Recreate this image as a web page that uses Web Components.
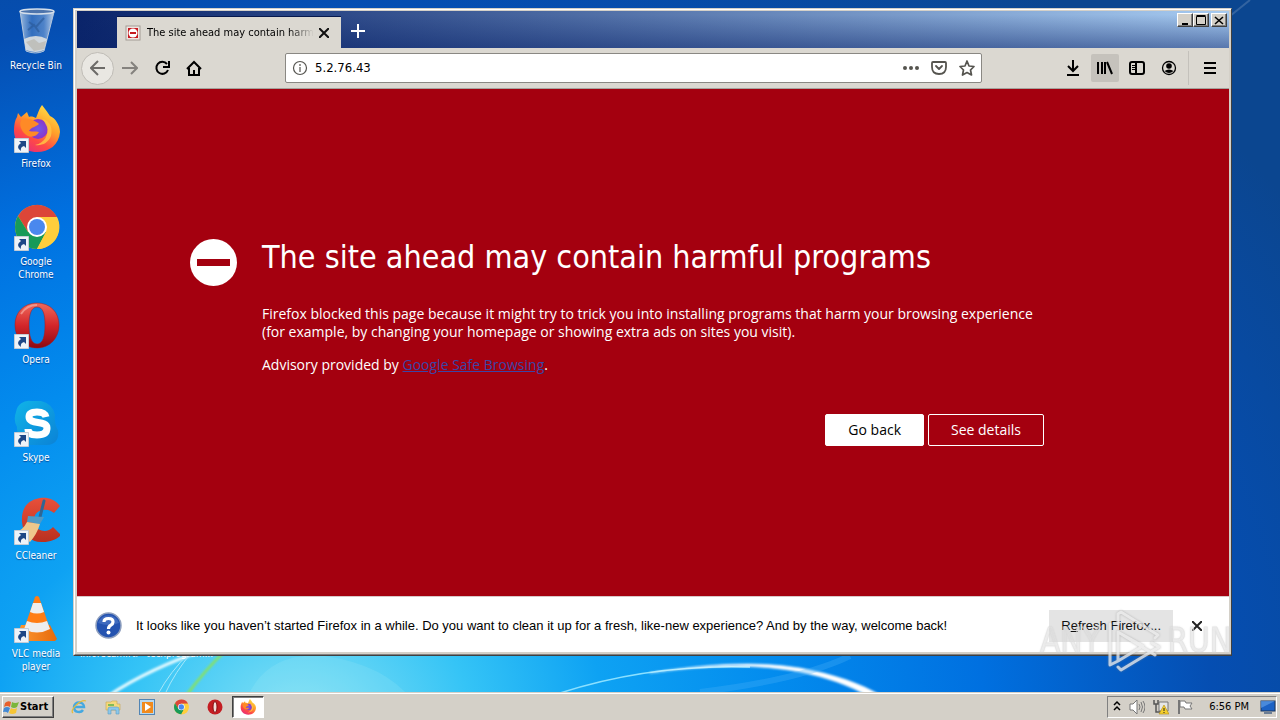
<!DOCTYPE html>
<html lang="en">
<head>
<meta charset="utf-8">
<title>Desktop</title>
<style>
  html, body { margin: 0; height: 100%; }
  body { font-family: "DejaVu Sans Condensed", Tahoma, sans-serif; overflow: hidden; }
  blocked-page a { color: #3b45a6; }
  blocked-page p { margin: 0 0 15px; }
</style>
</head>
<body>
<win-desktop>
  <desktop-icon slot="icons" name="recycle" plain>Recycle Bin</desktop-icon>
  <desktop-icon slot="icons" name="firefox">Firefox</desktop-icon>
  <desktop-icon slot="icons" name="chrome">Google Chrome</desktop-icon>
  <desktop-icon slot="icons" name="opera">Opera</desktop-icon>
  <desktop-icon slot="icons" name="skype">Skype</desktop-icon>
  <desktop-icon slot="icons" name="ccleaner">CCleaner</desktop-icon>
  <desktop-icon slot="icons" name="vlc">VLC media player</desktop-icon>
  <browser-window slot="window">
    <browser-tab slot="tab">The site ahead may contain harmful programs</browser-tab>
    <nav-bar slot="toolbar" url="5.2.76.43"></nav-bar>
    <blocked-page slot="page">
      <span slot="title">The site ahead may contain harmful programs</span>
      <p>Firefox blocked this page because it might try to trick you into installing programs that harm your browsing experience (for example, by changing your homepage or showing extra ads on sites you visit).</p>
      <p>Advisory provided by <a href="#advisory">Google Safe Browsing</a>.</p>
      <push-button slot="actions" kind="primary">Go back</push-button>
      <push-button slot="actions" kind="outline">See details</push-button>
    </blocked-page>
    <notification-bar slot="notice">It looks like you haven’t started Firefox in a while. Do you want to clean it up for a fresh, like-new experience? And by the way, welcome back!
      <push-button slot="action" kind="flat">R<u>e</u>fresh Firefox...</push-button>
    </notification-bar>
  </browser-window>
  <task-bar slot="taskbar"></task-bar>
  <any-watermark slot="overlay"></any-watermark>
</win-desktop>

<script>
const ART = {
recycle: `<svg viewBox="0 0 48 48"><defs><linearGradient id="g" x2="1"><stop offset="0" stop-color="#b8cfe8" stop-opacity=".85"/><stop offset=".35" stop-color="#4a7fc4" stop-opacity=".65"/><stop offset=".7" stop-color="#7fa6d8" stop-opacity=".6"/><stop offset="1" stop-color="#d5e2f2" stop-opacity=".9"/></linearGradient></defs><path d="M8 4 L14 44 Q24 48 32 44 L42 5Z" fill="url(#g)" stroke="#b4c6dc"/><path d="M12 32 Q24 26 35 32 L32 43 Q24 47 14 43Z" fill="#dfe1e0" opacity=".9"/><path d="M14 35l8-3 5 4 7-2-2 8-10 2z" fill="#b9b6ae" opacity=".7"/><path d="M17 15l7 5 8-9M16 23l6-5 5 7" fill="none" stroke="#295996" stroke-width="2" opacity=".6"/><ellipse cx="25" cy="4.500" rx="17" ry="2.500" fill="#4d74ac" stroke="#d4deea" stroke-width="1.500"/></svg>`,
firefox: `<svg viewBox="0 0 48 48"><defs><linearGradient id="f" x1=".8" y1="0" x2=".2" y2="1"><stop offset="0" stop-color="#ffe64a"/><stop offset=".4" stop-color="#ffa02a"/><stop offset=".7" stop-color="#ff4a45"/><stop offset="1" stop-color="#e52a7e"/></linearGradient><radialGradient id="p"><stop offset="0" stop-color="#6f5be8"/><stop offset="1" stop-color="#8b35c8"/></radialGradient></defs><path d="M30 0C34 5 36 8 38 11C43 13 48 20 48 27C47 40 37 47 25 47C11 47 2 38 2 25C2 20 3 15 5 12L6 8L9 12L15 7L17 12C19 11 22 12 24 13C26 8 27 4 30 0Z" fill="url(#f)"/><circle cx="26" cy="24" r="10" fill="url(#p)"/><path d="M10 14C16 12 24 16 27 19C24 22 19 22 17 26C21 27 23 26 27 27C24 33 16 33 12 28C8 23 7 18 10 14Z" fill="#ff8a26"/><path d="M31 14C38 16 41 23 39 31C36 38 30 41 23 40C33 38 37 29 35 22Z" fill="#ffc344" opacity=".85"/></svg>`,
chrome: `<svg viewBox="0 0 48 48"><circle cx="25" cy="24" r="22" fill="#fdd03b"/><path d="M6 13A22 22 0 0 1 45 14L25 14L16 29Z" fill="#dc4638"/><path d="M6 13A22 22 0 0 0 25 46L34 29L16 29Z" fill="#179a58"/><path d="M45 14A22 22 0 0 1 25 46L34 29L25 14Z" fill="#ffce3c"/><circle cx="25" cy="24" r="10" fill="#fff"/><circle cx="25" cy="24" r="8" fill="#4a88ee"/></svg>`,
opera: `<svg viewBox="0 0 48 48"><defs><linearGradient id="o" x2="0" y2="1"><stop offset="0" stop-color="#ef6a5c"/><stop offset=".5" stop-color="#d3262a"/><stop offset="1" stop-color="#8d0912"/></linearGradient></defs><path fill-rule="evenodd" d="M25 2C38 2 47 11 47 24S38 47 25 47S3 37 3 24S12 2 25 2ZM25 6C19 6 17 14 17 24S19 43 25 43S33 35 33 24S31 6 25 6Z" fill="url(#o)" stroke="#a11a20" stroke-width=".5"/><path d="M9 13C14 5 20 4 25 4" fill="none" stroke="#f7aba0" stroke-width="2" opacity=".7"/></svg>`,
skype: `<svg viewBox="0 0 48 48"><defs><linearGradient id="s" x2="1" y2="1"><stop offset="0" stop-color="#10b4e8"/><stop offset="1" stop-color="#0b82d6"/></linearGradient></defs><path d="M4 13A13 13 0 0 1 19 2H29A17 17 0 0 1 43 16Q42 25 46 31Q48 45 35 46H18A17 17 0 0 1 5 28Q1 21 4 13Z" fill="url(#s)"/><path d="M34 18C33 14 30 13 25 13C19 13 17 15 17 18C17 26 35 21 35 29C35 34 31 36 25 36C19 36 16 34 16 30" fill="none" stroke="#fff" stroke-width="7"/></svg>`,
ccleaner: `<svg viewBox="0 0 48 48"><defs><linearGradient id="c" x2="0" y2="1"><stop offset="0" stop-color="#e8503b"/><stop offset="1" stop-color="#b9301f"/></linearGradient></defs><path d="M48 9C43 2 35 0 28 1C15 3 9 12 10 25C11 38 20 46 31 45C39 45 45 42 49 38L41 30C36 36 26 35 23 28C20 20 24 14 31 13C36 12 39 14 42 16Z" fill="url(#c)"/><path d="M32 4L28 20" stroke="#2f6694" stroke-width="3" stroke-linecap="round"/><path d="M16 19L32 20L28 27L15 25Z" fill="#4f9ac6"/><path d="M15 25L28 27Q25 37 18 45L4 35Q11 33 15 25Z" fill="#efc78b"/></svg>`,
vlc: `<svg viewBox="0 0 48 48"><defs><linearGradient id="v" x2="1"><stop offset="0" stop-color="#ff9a32"/><stop offset="1" stop-color="#e56a0c"/></linearGradient></defs><path d="M9 30H38L45 44L43 46H8L4 44Z" fill="url(#v)"/><path d="M23 2Q25 0 27 2L38 34Q25 41 12 34Z" fill="#ff7d14"/><path d="M21 8H29L32 17Q25 20 18 17Z" fill="#eee"/><path d="M15 26Q25 30 35 26L38 34Q25 41 12 34Z" fill="#eee"/></svg>`,
ie: `<svg viewBox="0 0 16 16"><path d="M3 8H13C13 2 3 2 3 8C3 14 10 14 12 11" fill="none" stroke="#45a8e0" stroke-width="2.500"/><path d="M2 14C-2 11 10 0 15 2" fill="none" stroke="#e4bb3e" stroke-width="1.300"/></svg>`,
folder: `<svg viewBox="0 0 16 16"><path d="M1 3H6L7 2H12V5H15V11H1Z" fill="#f5d97c" stroke="#c6a650" stroke-width=".6"/><path d="M3 6H9" stroke="#58b04a" stroke-width="1.500"/><path d="M3 15V10Q3 8 5 8H12Q14 8 14 10V15H11V11H6V15Z" fill="#8cc7ea" stroke="#5d9ec4" stroke-width=".6"/></svg>`,
media: `<svg viewBox="0 0 16 16"><rect x=".5" y=".5" width="15" height="15" fill="#b9d8ee" stroke="#5285b4"/><rect x="3" y="3" width="11" height="11" fill="#f18a1c"/><path d="M6 4V12L12 8Z" fill="#fff"/></svg>`,
operasm: `<svg viewBox="0 0 16 16"><circle cx="8" cy="8" r="7.500" fill="#c41d22"/><ellipse cx="8" cy="8" rx="2" ry="5.500" fill="#f3dcd8" stroke="#850c10"/></svg>`,
flag: `<svg viewBox="0 0 16 16"><path d="M2 4Q5 1 8 3L7 8Q4 6 1 8Z" fill="#e7602c"/><path d="M9 3Q12 5 16 3L14 8Q11 10 8 8Z" fill="#7bb63c"/><path d="M1 9Q4 7 7 9L5 14Q3 12 0 13Z" fill="#4289d4"/><path d="M8 9Q11 11 14 9L13 14Q9 16 6 14Z" fill="#f6c534"/></svg>`
};
const line = (d, w = 2, extra = '') => `<svg viewBox="0 0 16 16" width="16" height="16" fill="none" stroke="currentColor" stroke-width="${w}" ${extra} aria-hidden="true">${d}</svg>`;

function define(name, render) {
  customElements.define(name, class extends HTMLElement {
    connectedCallback() {
      if (this.shadowRoot) return;
      const t = document.createElement('template');
      t.innerHTML = render(this);
      this.attachShadow({ mode: 'open' }).append(t.content.cloneNode(true));
    }
  });
}

define('win-desktop', () => `
<style>
:host { display: flex; flex-direction: column; min-height: 100vh; position: relative; overflow: hidden;
  background: radial-gradient(ellipse 950px 750px at 300px 100%, #86e2f4 0, #35c4f6 18%, #0ea2f3 32%, #038cee 50%, #0070e0 72%, #054eb2 96%, #0b4690 125%); }
.wall { position: absolute; inset: 0; width: 100%; height: 100%; }
.area { display: grid; grid-template-columns: 73px minmax(0, 1fr); flex: 1; position: relative; }
.icons { width: 72px; }
.under { position: absolute; left: 80px; top: 647px; display: flex; gap: 8px; font-size: 10px; line-height: 13px; color: #fff; }
.win { display: flex; padding: 8px 48px 36px 0; position: relative; }
::slotted(browser-window) { flex: 1; min-width: 0; }
</style>
<svg class="wall" viewBox="0 0 1280 720" preserveAspectRatio="xMidYMax slice" aria-hidden="true" fill="none">
  <defs><filter id="b"><feGaussianBlur stdDeviation="1"/></filter></defs>
  <path d="M240 720Q255 650 325 656Q385 665 412 700" fill="#b5f0f5" opacity=".15"/>
  <path d="M108 696Q150 668 210 648" stroke="#e4faff" stroke-width="3" filter="url(#b)"/>
  <path d="M158 694Q170 672 190 652M165 694Q175 672 192 652" stroke="#a6e8fb" stroke-width="1"/>
  <path d="M186 696Q205 670 226 650" stroke="#82e070" stroke-width="3" filter="url(#b)"/>
  <path d="M560 693Q650 664 750 667" stroke="#8be0ff" stroke-width="1.500"/>
  <path d="M650 673Q740 658 800 668Q850 677 882 696L868 696Q840 680 800 672Q740 660 650 673Z" fill="#fff" stroke="#fff" stroke-width=".5" filter="url(#b)"/>
  <path d="M700 692Q800 680 850 656" stroke="#4bb4fa" stroke-width="6" opacity=".3"/>
  <path d="M1225 20L1250 0" stroke="#7f9bc0" opacity=".35" stroke-width="2"/>
</svg>
<div class="area">
  <div class="icons"><slot name="icons"></slot></div>
  <div class="under"><span>inforecam.rtf</span><span>techprogram...</span></div>
  <div class="win"><slot name="window"></slot></div>
</div>
<slot name="taskbar"></slot><slot name="overlay"></slot>`);

define('desktop-icon', el => `
<style>
:host { display: flex; flex-direction: column; align-items: center; gap: 4px; box-sizing: border-box; height: 98px; padding-top: 7px; color: #fff; }
.art { width: 48px; height: 48px; position: relative; }
.art > svg:first-child { width: 48px; height: 48px; display: block; }
.cut { position: absolute; left: 2px; bottom: 0; width: 15px; height: 15px; }
.label { font-size: 10px; line-height: 13px; text-align: center; width: 60px; text-shadow: 0 1px 1px #0047; }
</style>
<div class="art">${ART[el.getAttribute('name')]}${el.hasAttribute('plain') ? '' : '<svg class="cut" viewBox="0 0 15 15"><path d="M.5.5H14.500V14.500H.5Z" fill="#eef3f8" stroke="#c3cbd5"/><path d="M5 3H12V10L10 8Q6 9 7 13Q1 9 7 5Z" fill="#1d4786"/></svg>'}</div>
<div class="label"><slot></slot></div>`);

define('browser-window', () => `
<style>
:host { display: flex; flex-direction: column; box-sizing: border-box; border: 1px solid; border-color: #d4d0c8 #404040 #404040 #d4d0c8; position: relative; background: #d4d0c8; }
.frame { flex: 1; display: flex; flex-direction: column; border-style: solid; border-width: 1px 0 1px 1px; border-color: #fff #fff #808080 #fff; padding: 1px 2px 2px 2px; }
.title { display: flex; align-items: flex-end; height: 37px; box-sizing: border-box; padding-left: 40px;
  background: linear-gradient(#0a246a00 10%, #0a246a80), linear-gradient(90deg, #0a246a, #a6caf0); position: relative; color: #fff; }
.plus { width: 34px; height: 34px; border: 0; padding: 0; background: none; color: #fff; display: grid; place-items: center; }
.caps { position: absolute; right: 2px; top: 2px; display: flex; }
.caps button { width: 16px; height: 14px; box-sizing: border-box; padding: 0; border: 1px solid; border-color: #fff #404040 #404040 #fff; box-shadow: inset -1px -1px #808080; background: #d4d0c8; display: grid; place-items: center; }
.caps button:last-child { margin-left: 2px; }
.caps svg { display: block; }
.page { flex: 1; display: flex; flex-direction: column; }
::slotted(blocked-page) { flex: 1; }
</style>
<div class="frame">
<div class="title"><slot name="tab"></slot>
  <button class="plus" aria-label="New tab"><svg width="14" height="14" stroke="#fff" stroke-width="2"><path d="M7 0V14M0 7H14"/></svg></button>
  <div class="caps">
    <button aria-label="Minimize"><svg width="10" height="9" stroke="#000" stroke-width="2"><path d="M2 8H8"/></svg></button>
    <button aria-label="Maximize"><svg width="10" height="10" fill="none" stroke="#000"><path d="M.5 1.500H9.500V9.500H.5ZM.5.5H9.500"/></svg></button>
    <button aria-label="Close"><svg width="10" height="9" stroke="#000" stroke-width="1.600"><path d="M1 1L9 8M9 1L1 8"/></svg></button>
  </div>
</div>
<slot name="toolbar"></slot>
<div class="page"><slot name="page"></slot></div>
<slot name="notice"></slot>
</div>`);

define('browser-tab', () => `
<style>
:host { display: flex; align-items: center; box-sizing: border-box; width: 224px; height: 32px; padding: 0 7px 0 8px; background: #dbd8d1; color: #000; border-top: 1px solid #07194d; }
.fav { flex: none; width: 16px; height: 16px; margin-right: 6px; }
.text { flex: 1; overflow: hidden; white-space: nowrap; -webkit-mask-image: linear-gradient(90deg, #000 85%, transparent); mask-image: linear-gradient(90deg, #000 85%, transparent); font-size: 11px; line-height: 16px; }
button { border: 0; padding: 0; background: none; width: 20px; height: 20px; display: grid; place-items: center; }
</style>
<svg class="fav" viewBox="0 0 16 16" aria-hidden="true"><rect x="1" y="1" width="14" height="14" fill="#f1e4e0" stroke="#a39c96"/><rect x="3" y="3" width="10" height="10" fill="#c61a20"/><circle cx="8" cy="8" r="4.500" fill="#fff"/><path d="M5 8H11" stroke="#c61a20" stroke-width="2"/></svg>
<div class="text"><slot></slot></div>
<button aria-label="Close tab"><svg width="10" height="10" stroke="#111" stroke-width="2"><path d="M0 0L10 10M10 0L0 10"/></svg></button>`);

define('nav-bar', el => `
<style>
:host { display: flex; align-items: center; box-sizing: border-box; height: 41px; padding: 0 3px 0 4px; background: #dbd8d1; border-bottom: 1px solid #a5a29c; color: #000; }
button { box-sizing: border-box; border: 0; padding: 0; width: 32px; height: 28px; background: none; color: inherit; display: grid; place-items: center; }
svg { display: block; }
.back { width: 33px; height: 33px; border: 1px solid #bfbcb6; border-radius: 50%; background: #e9e7e2; color: #6d6b68; }
.fwd { color: #85827e; }
.url { flex: 1; min-width: 0; display: flex; align-items: center; box-sizing: border-box; height: 30px; margin: 0 75px; padding: 0 6px; background: #fff; border: 1px solid #8a8883; border-radius: 2px; color: #55544f; }
.url button { width: 28px; }
.url .info { width: 16px; margin-right: 5px; }
.url .last { margin-right: -6px; }
input { flex: 1; min-width: 0; border: 0; padding: 0 2px; outline: 0; background: none; font: 13px/18px "DejaVu Sans Condensed", Tahoma, sans-serif; color: #000; }
.on { width: 28px; margin: 0 2px; background: #c5c2bc; border-radius: 2px; }
.menu { width: 38px; height: 34px; border-left: 1px solid #c4c1bb; margin-left: 3px; padding-left: 4px; }
</style>
<button class="back" aria-label="Back">${line('<path d="M15 8H1M8 1L1 8L8 15"/>')}</button>
<button class="fwd" aria-label="Forward">${line('<path d="M0 8H15M9 2L15 8L9 14"/>')}</button>
<button aria-label="Reload">${line('<path d="M13 4A6 6 0 1 0 14 10M15 1V7H9"/>')}</button>
<button aria-label="Home">${line('<path d="M1 9L8 2L15 9M3 8V15H13V8M8 10V15"/>')}</button>
<div class="url">
  <button class="info" aria-label="Site information">${line('<circle cx="8" cy="8" r="6.500"/><path d="M8 7V12M8 4V6"/>', 1.2)}</button>
  <input aria-label="Address" value="${el.getAttribute('url')}">
  <button aria-label="Page actions">${line('<g fill="currentColor" stroke="none"><circle cx="2" cy="8" r="2"/><circle cx="8" cy="8" r="2"/><circle cx="14" cy="8" r="2"/></g>')}</button>
  <button aria-label="Save to Pocket">${line('<path d="M2 2H14Q15 2 15 3V7Q15 14 8 14T1 7V3Q1 2 2 2ZM5 6L8 9L11 6"/>', 1.8, 'stroke-linecap="round" stroke-linejoin="round"')}</button>
  <button class="last" aria-label="Bookmark">${line('<path d="M8 1L10 6L15 6.500L11.500 10L12.500 15L8 12.500L3.500 15L4.500 10L1 6.500L6 6Z"/>', 1.7, 'stroke-linejoin="round"')}</button>
</div>
<button aria-label="Downloads">${line('<path d="M8 0V11M3 6L8 11L13 6M2 15H14"/>')}</button>
<button class="on" aria-label="Library">${line('<path d="M1 2V14M5 2V14M8 2V14M10 2L15 14"/>')}</button>
<button aria-label="Sidebars">${line('<rect x="1" y="2" width="14" height="12" rx="2"/><path d="M7 2V14"/><path stroke-width="1" d="M3 5.500H6M3 7.500H6M3 9.500H6"/>')}</button>
<button aria-label="Account">${line('<circle cx="8" cy="8" r="6.500"/><circle cx="8" cy="6" r="2.800" fill="currentColor" stroke="none"/><path d="M3.500 11Q8 8 12.500 11Q8 15 3.500 11Z" fill="currentColor" stroke="none"/>', 1.3)}</button>
<button class="menu" aria-label="Menu">${line('<path d="M2 3H14M2 8H14M2 13H14"/>')}</button>`);

define('push-button', () => `
<style>
:host { display: inline-block; }
button { box-sizing: border-box; height: 32px; padding: 0 22px; border: 1px solid #fff; border-radius: 2px; font: 14px/18px "Open Sans", Tahoma, sans-serif; }
:host([kind=primary]) button { background: #fff; color: #000; }
:host([kind=outline]) button { background: none; color: #fff; }
:host([kind=flat]) button { background: #e4e4e4; color: #111; border: 0; border-radius: 0; padding: 0 12px; font: 13px/18px "Liberation Sans", Tahoma, sans-serif; }
</style>
<button><slot></slot></button>`);

define('blocked-page', () => `
<style>
:host { display: flex; align-items: center; justify-content: center; background: #a4000f; color: #fff; padding: 0 72px; }
.body { width: 782px; display: grid; grid-template-columns: minmax(0, 1fr); padding-bottom: 2px; }
.head { display: flex; align-items: center; gap: 25px; margin-left: -72px; }
.head svg { flex: none; }
h1 { margin: 0; font-weight: 400; font-size: 32px; line-height: 40px; padding-bottom: 10px; }
.copy { font: 14px/18px "Open Sans", Tahoma, sans-serif; padding-top: 18px; }
.actions { display: flex; justify-content: flex-end; gap: 4px; margin-top: 25px; }
</style>
<div class="body">
  <div class="head"><svg width="47" height="47" aria-hidden="true"><circle cx="23.500" cy="23.500" r="23.500" fill="#fff"/><path d="M7 23.500H40" stroke="#a4000f" stroke-width="7"/></svg><h1><slot name="title"></slot></h1></div>
  <div class="copy"><slot></slot></div>
  <div class="actions"><slot name="actions"></slot></div>
</div>`);

define('notification-bar', () => `
<style>
:host { display: flex; align-items: center; box-sizing: border-box; min-height: 56px; padding: 2px 24px 0 18px; background: #fff; border-top: 1px solid #d8c8c8; color: #000; }
.q { flex: none; margin-right: 14px; }
.msg { flex: 1; font: 13px/18px "Liberation Sans", Tahoma, sans-serif; }
.close { border: 0; padding: 0; background: none; width: 16px; height: 16px; margin-left: 16px; display: grid; place-items: center; }
</style>
<svg class="q" width="27" height="27" viewBox="0 0 27 27" aria-hidden="true"><circle cx="13.500" cy="13.500" r="12.500" fill="#2453b0" stroke="#8e9fbe" stroke-width="1.500"/><path d="M3 11A11 11 0 0 1 24 11Q14 15 3 11Z" fill="#527cca" opacity=".6"/><path d="M9 10Q9 6.500 13.500 6.500T18 10Q18 12 15.500 13.500Q13.500 14.500 13.500 17" fill="none" stroke="#fff" stroke-width="3.200"/><circle cx="13.500" cy="20.500" r="2" fill="#fff"/></svg>
<div class="msg"><slot></slot></div>
<slot name="action"></slot>
<button class="close" aria-label="Dismiss"><svg width="10" height="10" stroke="#222" stroke-width="2"><path d="M0 0L10 10M10 0L0 10"/></svg></button>`);

define('task-bar', () => `
<style>
:host { display: flex; align-items: center; box-sizing: border-box; height: 28px; padding: 1px 3px 0 2px; background: #d4d0c8; border-top: 1px solid #d4d0c8; box-shadow: inset 0 1px #fff; position: relative; }
button { border: 0; padding: 0; background: none; display: grid; place-items: center; }
.start { display: flex; align-items: center; gap: 1px; box-sizing: border-box; width: 52px; height: 22px; border: 1px solid; border-color: #fff #404040 #404040 #fff; box-shadow: inset -1px -1px #808080; font: bold 11px/16px "DejaVu Sans Condensed", Tahoma, sans-serif; color: #000; }
svg { width: 16px; height: 16px; display: block; }
.apps { display: flex; flex: 1; padding-left: 8px; }
.apps button { width: 34px; height: 22px; }
.apps .active { width: 32px; box-sizing: border-box; background: #fff; border: 1px solid; border-color: #404040 #fff #fff #404040; box-shadow: inset 1px 1px #808080; }
.tray { display: flex; align-items: center; gap: 8px; box-sizing: border-box; height: 22px; padding: 0 0 0 5px; border: 1px solid; border-color: #808080 #fff #fff #808080; font-size: 11px; line-height: 16px; }
time { margin: 0 3px 0 8px; }
.tray svg:first-child { width: 8px; }
</style>
<button class="start">${ART.flag}Start</button>
<div class="apps">
  <button aria-label="Internet Explorer">${ART.ie}</button><button aria-label="Explorer">${ART.folder}</button><button aria-label="Media Player">${ART.media}</button><button aria-label="Chrome">${ART.chrome}</button><button aria-label="Opera">${ART.operasm}</button><button class="active" aria-label="Firefox">${ART.firefox}</button>
</div>
<div class="tray">
  <svg viewBox="0 0 8 16" fill="none" stroke="#000" stroke-width="1.500"><path d="M1 6L4 3L7 6M1 11L4 8L7 11"/></svg>
  <svg viewBox="0 0 16 16" fill="#fff" stroke="#777"><path d="M1 5H4L8 1V15L4 11H1Z"/><path fill="none" d="M10 5Q12 8 10 11M12 3Q15 8 12 13M14 2Q18 8 14 14"/></svg>
  <svg viewBox="0 0 16 16"><path d="M6 3H15V12H6Z" fill="#e6e6e6" stroke="#777"/><path d="M1 1V5H5V1M3 5V13H8" fill="none" stroke="#555" stroke-width="1.500"/><path d="M11 6L16 15H6Z" fill="#f5cf2e" stroke="#b08b13" stroke-width=".6"/><path d="M11 9V12M11 13V14" stroke="#222"/></svg>
  <svg viewBox="0 0 16 16"><path d="M2 1V15" stroke="#777" stroke-width="2"/><path d="M3 2H8L9 4H15L13 7L15 10H8L7 8H3Z" fill="#fff" stroke="#777"/></svg>
  <time>6:56 PM</time>
  <svg viewBox="0 0 16 16"><rect x="1" y="2" width="14" height="10" fill="#1c62c4" stroke="#1a365f"/><path d="M1 2H15L1 9Z" fill="#5c9be6" opacity=".7"/><path d="M4 14H12" stroke="#6c7e95" stroke-width="2"/></svg>
</div>`);

define('any-watermark', () => `
<style>
:host { position: absolute; right: 48px; bottom: 47px; display: flex; align-items: center; justify-content: space-between; width: 192px; height: 64px; pointer-events: none; opacity: .8; }
span { font-size: 33px; line-height: 64px; color: #fff6; -webkit-text-stroke: 1px #dcdcdccc; text-shadow: 0 0 2px #8886; }
svg { width: 56px; height: 64px; filter: drop-shadow(0 0 1px #888a); }
</style>
<span>ANY</span>
<svg viewBox="0 0 56 64" fill="none" stroke="#e9e9e9" stroke-width="3" stroke-linejoin="round" stroke-linecap="round" aria-hidden="true"><path d="M12 15V5L15 3L52 26L49 29M4 15V56L12 52M12 23L37 37L12 52V23L49 46M12 58L15 61L53 38L46 34"/></svg>
<span>RUN</span>`);
</script>
</body>
</html>
